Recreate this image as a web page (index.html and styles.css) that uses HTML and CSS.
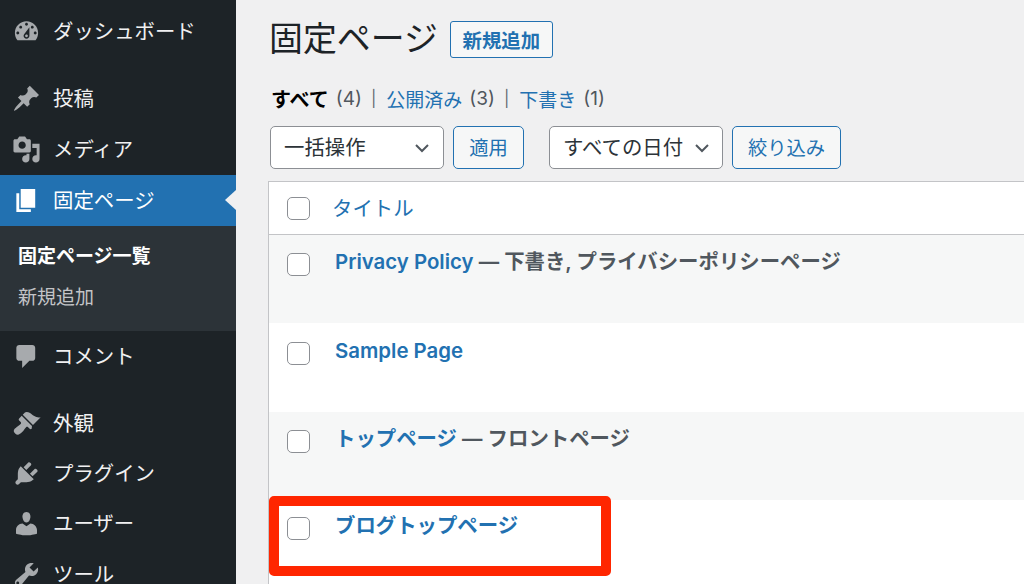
FILE: index.html
```html
<!DOCTYPE html>
<html lang="ja">
<head>
<meta charset="utf-8">
<title>固定ページ</title>
<link rel="stylesheet" href="styles.css">
</head>
<body>
<div class="app">
  <nav class="side">
    <a class="item"><svg class="ic" viewBox="0 0 20 20"><path fill-rule="evenodd" d="M3.76 16h12.48c1.1-1.37 1.76-3.11 1.76-5 0-4.42-3.58-8-8-8s-8 3.58-8 8c0 1.89.66 3.63 1.76 5zM10 4c.55 0 1 .45 1 1s-.45 1-1 1-1-.45-1-1 .45-1 1-1zM6 6c.55 0 1 .45 1 1s-.45 1-1 1-1-.45-1-1 .45-1 1-1zm8 0c.55 0 1 .45 1 1s-.45 1-1 1-1-.45-1-1 .45-1 1-1zm-5.37 5.55L12 7v6c0 1.1-.9 2-2 2s-2-.9-2-2c0-.57.24-1.08.63-1.45zM4 10c.55 0 1 .45 1 1s-.45 1-1 1-1-.45-1-1 .45-1 1-1zm12 0c.55 0 1 .45 1 1s-.45 1-1 1-1-.45-1-1 .45-1 1-1zm-5 3c0-.55-.45-1-1-1s-1 .45-1 1 .45 1 1 1 1-.45 1-1z"/></svg>ダッシュボード</a>
    <a class="item sep"><svg class="ic" viewBox="0 0 20 20"><path d="M10.44 3.02l1.82-1.82 6.36 6.35-1.83 1.82c-1.05-.68-2.48-.57-3.41.36l-.75.75c-.92.93-1.04 2.35-.35 3.41l-1.83 1.82-2.41-2.41-2.8 2.79c-.42.42-3.38 2.71-3.8 2.29s1.86-3.39 2.28-3.81l2.79-2.79L4.1 9.36l1.83-1.82c1.05.69 2.48.57 3.4-.36l.75-.75c.93-.92 1.05-2.35.36-3.41z"/></svg>投稿</a>
    <a class="item"><svg class="ic" viewBox="0 0 20 20"><path d="M13 11V4c0-.55-.45-1-1-1h-1.67L9 1H5L3.67 3H2c-.55 0-1 .45-1 1v7c0 .55.45 1 1 1h10c.55 0 1-.45 1-1zM7 4.5c1.38 0 2.5 1.12 2.5 2.5S8.38 9.5 7 9.5 4.5 8.38 4.500 7 5.62 4.500 7 4.500zM14 6h5v10.500c0 1.380-1.120 2.500-2.500 2.500S14 17.880 14 16.500s1.120-2.500 2.500-2.500c.17 0 .34.020.5.050V9h-3V6zm-4 8.050V13h2v3.500c0 1.380-1.120 2.500-2.500 2.500S7 17.880 7 16.500 8.120 14 9.500 14c.17 0 .34.020.5.050z" fill-rule="evenodd"/></svg>メディア</a>
    <a class="item active"><svg class="ic" viewBox="0 0 20 20"><path d="M6 15V2h10v13H6zm-1 1h8v2H3V5h2v11z"/></svg>固定ページ</a>
    <div class="sub">
      <a class="sub-cur">固定ページ一覧</a>
      <a class="sub-link">新規追加</a>
    </div>
    <a class="item"><svg class="ic" viewBox="0 0 20 20"><path d="M5 2h9c1.100 0 2 .9 2 2v7c0 1.100-.9 2-2 2h-2l-5 5v-5H5c-1.100 0-2-.9-2-2V4c0-1.100.9-2 2-2z"/></svg>コメント</a>
    <a class="item sep"><svg class="ic" viewBox="0 0 20 20"><path d="M14.480 11.060L7.410 3.990l1.500-1.500c.5-.56 2.300-.47 3.510.32 1.210.8 1.430 1.280 2.910 2.100 1.180.64 2.450 1.260 4.450.85zm-.71.71L6.700 4.700 4.930 6.470c-.39.390-.39 1.020 0 1.410l1.060 1.060c.39.390.39 1.030 0 1.420-.6.600-1.430 1.110-2.210 1.690-.35.260-.7.530-1.010.84C1.430 13.730.430 15.140 2.170 16.880c1.730 1.730 3.140.73 4.990-1.120.31-.31.580-.66.840-1.010.580-.78 1.090-1.610 1.690-2.210.39-.39 1.030-.39 1.420 0l1.060 1.060c.39.390 1.020.39 1.410 0z"/></svg>外観</a>
    <a class="item"><svg class="ic" viewBox="0 0 20 20"><path d="M13.110 4.360L9.870 7.600 8 5.730l3.240-3.240c.35-.34 1.050-.2 1.560.32.520.51.660 1.210.310 1.550zm-8 1.770l.91-1.120 9.010 9.010-1.190.84c-.71.710-2.630 1.160-3.820 1.160H6.140L4.900 17.260c-.59.590-1.540.59-2.120 0-.59-.58-.59-1.530 0-2.120l1.240-1.240v-3.880c0-1.130.4-3.190 1.090-3.890zm7.260 3.970l3.240-3.240c.34-.35 1.040-.21 1.550.31.520.51.660 1.210.31 1.550l-3.240 3.250z"/></svg>プラグイン</a>
    <a class="item"><svg class="ic" viewBox="0 0 20 20"><path d="M10 9.250c-2.270 0-2.730-3.440-2.730-3.440C7 4.020 7.820 2 9.970 2c2.160 0 2.980 2.020 2.710 3.810 0 0-.41 3.440-2.680 3.440zm0 2.570L12.720 10c2.390 0 4.520 2.330 4.520 4.530v2.490s-3.650 1.130-7.240 1.130c-3.650 0-7.240-1.130-7.240-1.130v-2.490c0-2.250 1.940-4.480 4.470-4.480z"/></svg>ユーザー</a>
    <a class="item"><svg class="ic" viewBox="0 0 20 20"><path d="M16.680 9.770c-1.340 1.340-3.300 1.670-4.950.99l-5.410 6.520c-.99.990-2.590.990-3.570 0-.99-.98-.99-2.580 0-3.570l6.520-5.420c-.68-1.650-.35-3.610.99-4.950 1.280-1.280 3.120-1.620 4.720-1.060l-2.890 2.890 2.820 2.820 2.860-2.870c.53 1.580.18 3.390-1.090 4.650zM4.660 15.170c-.39-.39-1.030-.39-1.420 0s-.39 1.030 0 1.420 1.030.39 1.420 0 .39-1.030 0-1.420z" fill-rule="evenodd"/></svg>ツール</a>
  </nav>
  <main class="main">
    <header class="head">
      <h1 class="title">固定ページ</h1>
      <a class="add">新規追加</a>
    </header>
    <ul class="views">
      <li class="cur">すべて</li><li class="cnt">(4)</li><li class="bar">|</li>
      <li class="lnk">公開済み</li><li class="cnt">(3)</li><li class="bar">|</li>
      <li class="lnk">下書き</li><li class="cnt">(1)</li>
    </ul>
    <div class="filters">
      <div class="select sel-first"><span>一括操作</span><svg class="chev" viewBox="0 0 16 10"><path d="M2 2l6 6 6-6"/></svg></div>
      <a class="btn btn-apply">適用</a>
      <div class="select sel-second"><span>すべての日付</span><svg class="chev" viewBox="0 0 16 10"><path d="M2 2l6 6 6-6"/></svg></div>
      <a class="btn">絞り込み</a>
    </div>
    <section class="table">
      <div class="thead"><span class="cb"></span><a class="th">タイトル</a></div>
      <div class="row alt r1"><span class="cb"></span><div class="cell"><a class="name">Privacy Policy</a><span class="state"> — 下書き, プライバシーポリシーページ</span></div></div>
      <div class="row r2"><span class="cb"></span><div class="cell"><a class="name">Sample Page</a></div></div>
      <div class="row alt r3"><span class="cb"></span><div class="cell"><a class="name">トップページ</a><span class="state"> — フロントページ</span></div></div>
      <div class="row r4"><span class="cb"></span><div class="cell"><a class="name">ブログトップページ</a></div></div>
    </section>
  </main>
  <div class="mark"></div>
</div>
</body>
</html>
```
FILE: styles.css
```css
* { box-sizing: border-box; }
html, body { margin: 0; padding: 0; height: 100%; overflow: hidden; }
body {
  font-family: "Inter", "Noto Sans CJK JP", sans-serif;
  background: #f0f0f1;
  color: #3c434a;
}
.app { position: relative; display: flex; width: 1024px; height: 584px; overflow: hidden; }

.side { flex: 0 0 236px; background: #1d2327; padding-top: 6.8px; color: #f0f0f1; }
.item {
  position: relative;
  display: flex; align-items: center;
  height: 50.4px; padding: 0 0 3px 12px;
  font-size: 20.4px; color: #f0f0f1; white-space: nowrap;
}
.item.sep { margin-top: 16.6px; }
.ic { flex: 0 0 29px; width: 29px; height: 29px; margin: 3px 12px 0 0; fill: #a7aaad; }
.active { background: #2271b1; color: #fff; height: 51.4px; }
.active .ic { fill: #fff; }
.active::after {
  content: ""; position: absolute; right: 0; top: 50%; margin-top: -10px;
  border: 10px solid transparent; border-left-width: 0; border-right: 11px solid #f0f0f1;
}
.sub { background: #2c3338; height: 105px; padding: 10.5px 0 0 18px; }
.sub a { display: block; font-size: 19px; height: 41px; line-height: 41px; white-space: nowrap; }
.sub-cur { color: #fff; font-weight: 700; }
.sub-link { color: #c3c4c7; }

.main { flex: 1; min-width: 0; padding: 0 0 0 34px; }
.head { display: flex; align-items: center; height: 61px; padding-top: 17px; }
.title { margin: 0 12px 0 -1px; font-size: 33.9px; font-weight: 400; color: #1d2327; line-height: 44px; white-space: nowrap; }
.add {
  display: flex; align-items: center; justify-content: center;
  width: 103px; height: 37px;
  border: 1.5px solid #2271b1; border-radius: 3px; background: #f6f7f7;
  color: #2271b1; font-size: 19.4px; font-weight: 600; white-space: nowrap;
}
.views {
  list-style: none; margin: 22px 0 0; padding: 0 0 0 1px;
  display: flex; align-items: center; gap: 7px; height: 30px;
  font-size: 19px; white-space: nowrap; color: #50575e;
}
.cur { color: #000; font-weight: 700; font-size: 20px; }
.lnk { color: #2271b1; }
.bar { color: #646970; margin: 0 3px 0 2px; font-size: 16px; }
.filters { display: flex; align-items: stretch; height: 43px; margin-top: 13px; }
.select {
  display: flex; align-items: center; justify-content: space-between;
  width: 174px; padding: 0 13px 4px;
  background: #fff; border: 1.5px solid #8c8f94; border-radius: 5px;
  font-size: 20.4px; color: #2c3338; white-space: nowrap;
}
.sel-second { padding-right: 12px; margin-left: 25px; }
.chev { width: 16px; height: 10px; margin-top: 4px; fill: none; stroke: #50575e; stroke-width: 2; }
.btn {
  display: flex; align-items: center; justify-content: center;
  width: 109px; margin-left: 9px; padding-bottom: 2px;
  background: #f6f7f7; border: 1.5px solid #2271b1; border-radius: 5px;
  color: #2271b1; font-size: 19.3px; white-space: nowrap;
}
.btn-apply { width: 71px; }

.table { margin: 12px 0 0 -2px; background: #fff; border-left: 1px solid #c3c4c7; border-top: 1px solid #c3c4c7; height: 404px; }
.cb {
  flex: 0 0 23px; width: 23px; height: 23px;
  background: #fff; border: 1.5px solid #8c8f94; border-radius: 5px;
}
.thead {
  display: flex; align-items: center; height: 53px; padding-left: 18px;
  border-bottom: 1px solid #c3c4c7; background: #fff;
}
.th { margin-left: 22px; margin-top: -2px; color: #2271b1; font-size: 20.4px; }
.row { display: flex; height: 88.3px; padding-left: 18px; background: #fff; }
.alt { background: #f6f7f7; }
.r1 { padding-top: 18px; }
.r2 { padding-top: 19px; }
.r3 { padding-top: 18px; }
.r4 { padding-top: 17px; height: 84px; }
.cell { margin-left: 25px; font-size: 20.4px; line-height: 18px; font-weight: 600; white-space: nowrap; }
.name { color: #2271b1; }
.state { color: #50575e; }

.mark {
  position: absolute; left: 269px; top: 496px; width: 342px; height: 80px;
  border: 10px solid #ff2600; border-radius: 5px;
}
```
